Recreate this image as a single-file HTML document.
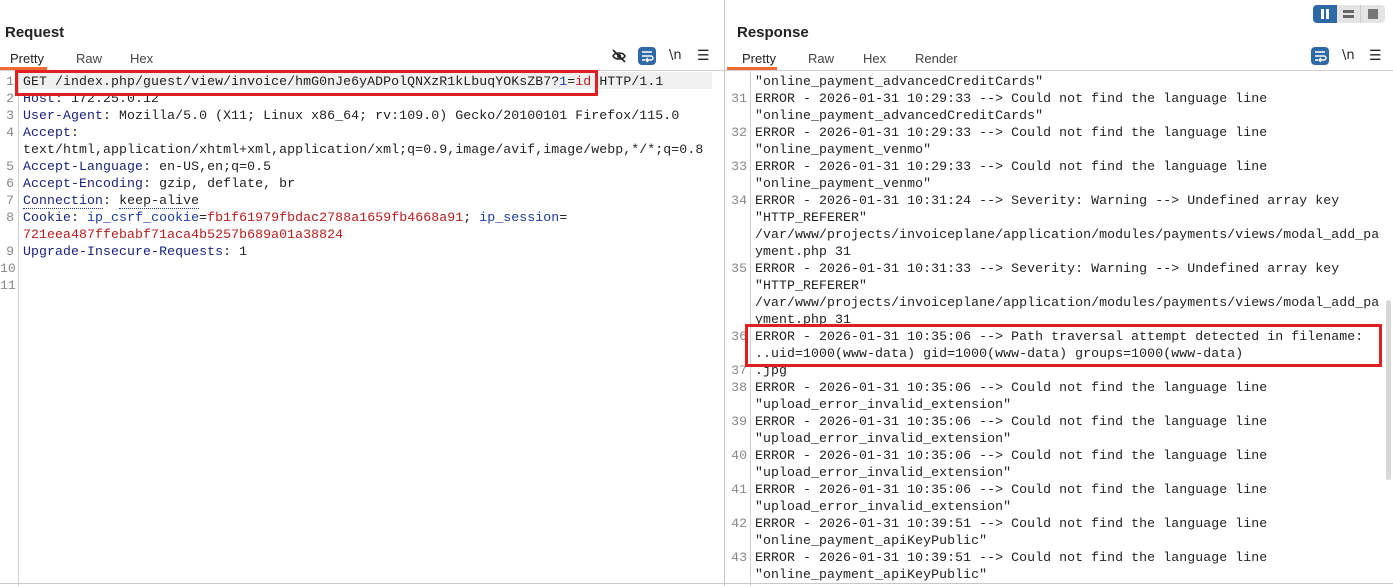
<!DOCTYPE html>
<html><head><meta charset="utf-8"><style>
*{margin:0;padding:0;box-sizing:border-box}
body{width:1393px;height:586px;overflow:hidden;background:#fff;font-family:"Liberation Sans",sans-serif;position:relative;color:#222}
.abs{position:absolute}
.h{font-weight:bold;font-size:15px;top:24px}
.tab{font-size:13px;top:51px;color:#444}
.code{font-family:"Liberation Mono",monospace;font-size:13.2px;letter-spacing:0.09px;white-space:pre;line-height:17px;position:absolute}
.ln{font-family:"Liberation Mono",monospace;font-size:13.2px;white-space:pre;line-height:17px;position:absolute;color:#888;text-align:right}
.k{color:#1a237e}.v{color:#b71c1c}.b{color:#1a3ca0}
.red{position:absolute;border:3px solid #e02020}
</style></head><body>
<div class="abs h" style="left:5px">Request</div>
<div class="abs tab" style="left:10px;color:#222">Pretty</div>
<div class="abs tab" style="left:76px">Raw</div>
<div class="abs tab" style="left:130px">Hex</div>
<div class="abs" style="left:0;top:67px;width:47px;height:3px;background:#f06a35"></div>
<div class="abs" style="left:0;top:70px;width:724px;height:1px;background:#d0d0d0"></div>
<svg class="abs" style="left:611px;top:48px" width="16" height="16" viewBox="0 0 16 16"><path d="M2 8c2-4 10-4 12 0c-2 4-10 4-12 0z" fill="none" stroke="#222" stroke-width="1.5"/><circle cx="8" cy="8" r="2" fill="#222"/><path d="M2 2l12 12" stroke="#222" stroke-width="1.6"/></svg>
<div class="abs" style="left:638px;top:47px;width:18px;height:18px;background:#2d6aa6;border-radius:4px"></div>
<svg class="abs" style="left:638px;top:47px" width="18" height="18" viewBox="0 0 18 18"><path d="M4 5h10M4 9h9a2 2 0 0 1 0 4h-4M4 13h3M10 11l-2 2 2 2" fill="none" stroke="#fff" stroke-width="1.4"/></svg>
<div class="abs" style="left:669px;top:48px;font-size:13px;font-family:'DejaVu Sans',sans-serif">\n</div>
<div class="abs" style="left:697px;top:47px;font-size:14px">☰</div>
<div class="abs" style="left:18px;top:71px;width:1px;height:515px;background:#d0d0d0"></div>
<div class="abs" style="left:19px;top:72px;width:693px;height:17px;background:#f0f0f0"></div>
<div class="ln" style="left:0;top:73px;width:14px">1
2
3
4

5
6
7
8

9
10
11</div>
<div class="code" style="left:23px;top:73px">GET /index.php/guest/view/invoice/hmG0nJe6yADPolQNXzR1kLbuqYOKsZB7?<span class="b">1</span>=<span class="v">id</span> HTTP/1.1
<span class="k">Host</span>: 172.25.0.12
<span class="k">User-Agent</span>: Mozilla/5.0 (X11; Linux x86_64; rv:109.0) Gecko/20100101 Firefox/115.0
<span class="k">Accept</span>:
text/html,application/xhtml+xml,application/xml;q=0.9,image/avif,image/webp,*/*;q=0.8
<span class="k">Accept-Language</span>: en-US,en;q=0.5
<span class="k">Accept-Encoding</span>: gzip, deflate, br
<span class="k" style="border-bottom:1px dotted #1a3ca0">Connection</span>: <span style="border-bottom:1px dotted #1a3ca0">keep-alive</span>
<span class="k">Cookie</span>: <span class="b">ip_csrf_cookie</span>=<span class="v">fb1f61979fbdac2788a1659fb4668a91</span>; <span class="b">ip_session</span>=
<span class="v">721eea487ffebabf71aca4b5257b689a01a38824</span>
<span class="k">Upgrade-Insecure-Requests</span>: 1</div>
<div class="red" style="left:15px;top:70px;width:583px;height:26px"></div>
<div class="abs" style="left:724px;top:0;width:1px;height:586px;background:#c8c8c8"></div>
<div class="abs" style="left:1313px;top:5px;width:72px;height:18px;background:#e4e4e4;border-radius:4px"></div>
<div class="abs" style="left:1313px;top:5px;width:24px;height:18px;background:#2d6aa6;border-radius:4px 0 0 4px"></div>
<div class="abs" style="left:1321px;top:9px;width:3px;height:10px;background:#fff"></div>
<div class="abs" style="left:1326px;top:9px;width:3px;height:10px;background:#fff"></div>
<div class="abs" style="left:1343px;top:10px;width:11px;height:3px;background:#666"></div>
<div class="abs" style="left:1343px;top:15px;width:11px;height:3px;background:#666"></div>
<div class="abs" style="left:1360px;top:5px;width:1px;height:18px;background:#ccc"></div>
<div class="abs" style="left:1368px;top:9px;width:10px;height:10px;background:#777"></div>
<div class="abs h" style="left:737px">Response</div>
<div class="abs tab" style="left:742px;color:#222">Pretty</div>
<div class="abs tab" style="left:808px">Raw</div>
<div class="abs tab" style="left:863px">Hex</div>
<div class="abs tab" style="left:915px">Render</div>
<div class="abs" style="left:727px;top:67px;width:50px;height:3px;background:#f06a35"></div>
<div class="abs" style="left:725px;top:70px;width:668px;height:1px;background:#d0d0d0"></div>
<div class="abs" style="left:1311px;top:47px;width:18px;height:18px;background:#2d6aa6;border-radius:4px"></div>
<svg class="abs" style="left:1311px;top:47px" width="18" height="18" viewBox="0 0 18 18"><path d="M4 5h10M4 9h9a2 2 0 0 1 0 4h-4M4 13h3M10 11l-2 2 2 2" fill="none" stroke="#fff" stroke-width="1.4"/></svg>
<div class="abs" style="left:1342px;top:48px;font-size:13px;font-family:'DejaVu Sans',sans-serif">\n</div>
<div class="abs" style="left:1369px;top:47px;font-size:14px">☰</div>
<div class="abs" style="left:750px;top:71px;width:1px;height:515px;background:#d0d0d0"></div>
<div class="abs" style="left:1386px;top:300px;width:5px;height:180px;background:#d8d8d8;border-radius:3px"></div>
<div class="ln" style="left:725px;top:73px;width:22px">
31

32

33

34



35



36

37
38

39

40

41

42

43
</div>
<div class="code" style="left:755px;top:73px">"online_payment_advancedCreditCards"
ERROR - 2026-01-31 10:29:33 --&gt; Could not find the language line
"online_payment_advancedCreditCards"
ERROR - 2026-01-31 10:29:33 --&gt; Could not find the language line
"online_payment_venmo"
ERROR - 2026-01-31 10:29:33 --&gt; Could not find the language line
"online_payment_venmo"
ERROR - 2026-01-31 10:31:24 --&gt; Severity: Warning --&gt; Undefined array key
"HTTP_REFERER"
/var/www/projects/invoiceplane/application/modules/payments/views/modal_add_pa
yment.php 31
ERROR - 2026-01-31 10:31:33 --&gt; Severity: Warning --&gt; Undefined array key
"HTTP_REFERER"
/var/www/projects/invoiceplane/application/modules/payments/views/modal_add_pa
yment.php 31
ERROR - 2026-01-31 10:35:06 --&gt; Path traversal attempt detected in filename:
..uid=1000(www-data) gid=1000(www-data) groups=1000(www-data)
.jpg
ERROR - 2026-01-31 10:35:06 --&gt; Could not find the language line
"upload_error_invalid_extension"
ERROR - 2026-01-31 10:35:06 --&gt; Could not find the language line
"upload_error_invalid_extension"
ERROR - 2026-01-31 10:35:06 --&gt; Could not find the language line
"upload_error_invalid_extension"
ERROR - 2026-01-31 10:35:06 --&gt; Could not find the language line
"upload_error_invalid_extension"
ERROR - 2026-01-31 10:39:51 --&gt; Could not find the language line
"online_payment_apiKeyPublic"
ERROR - 2026-01-31 10:39:51 --&gt; Could not find the language line
"online_payment_apiKeyPublic"</div>
<div class="red" style="left:745px;top:324px;width:637px;height:43px"></div>
<div class="abs" style="left:0;top:583px;width:1393px;height:1px;background:#c8c8c8"></div>
</body></html>
